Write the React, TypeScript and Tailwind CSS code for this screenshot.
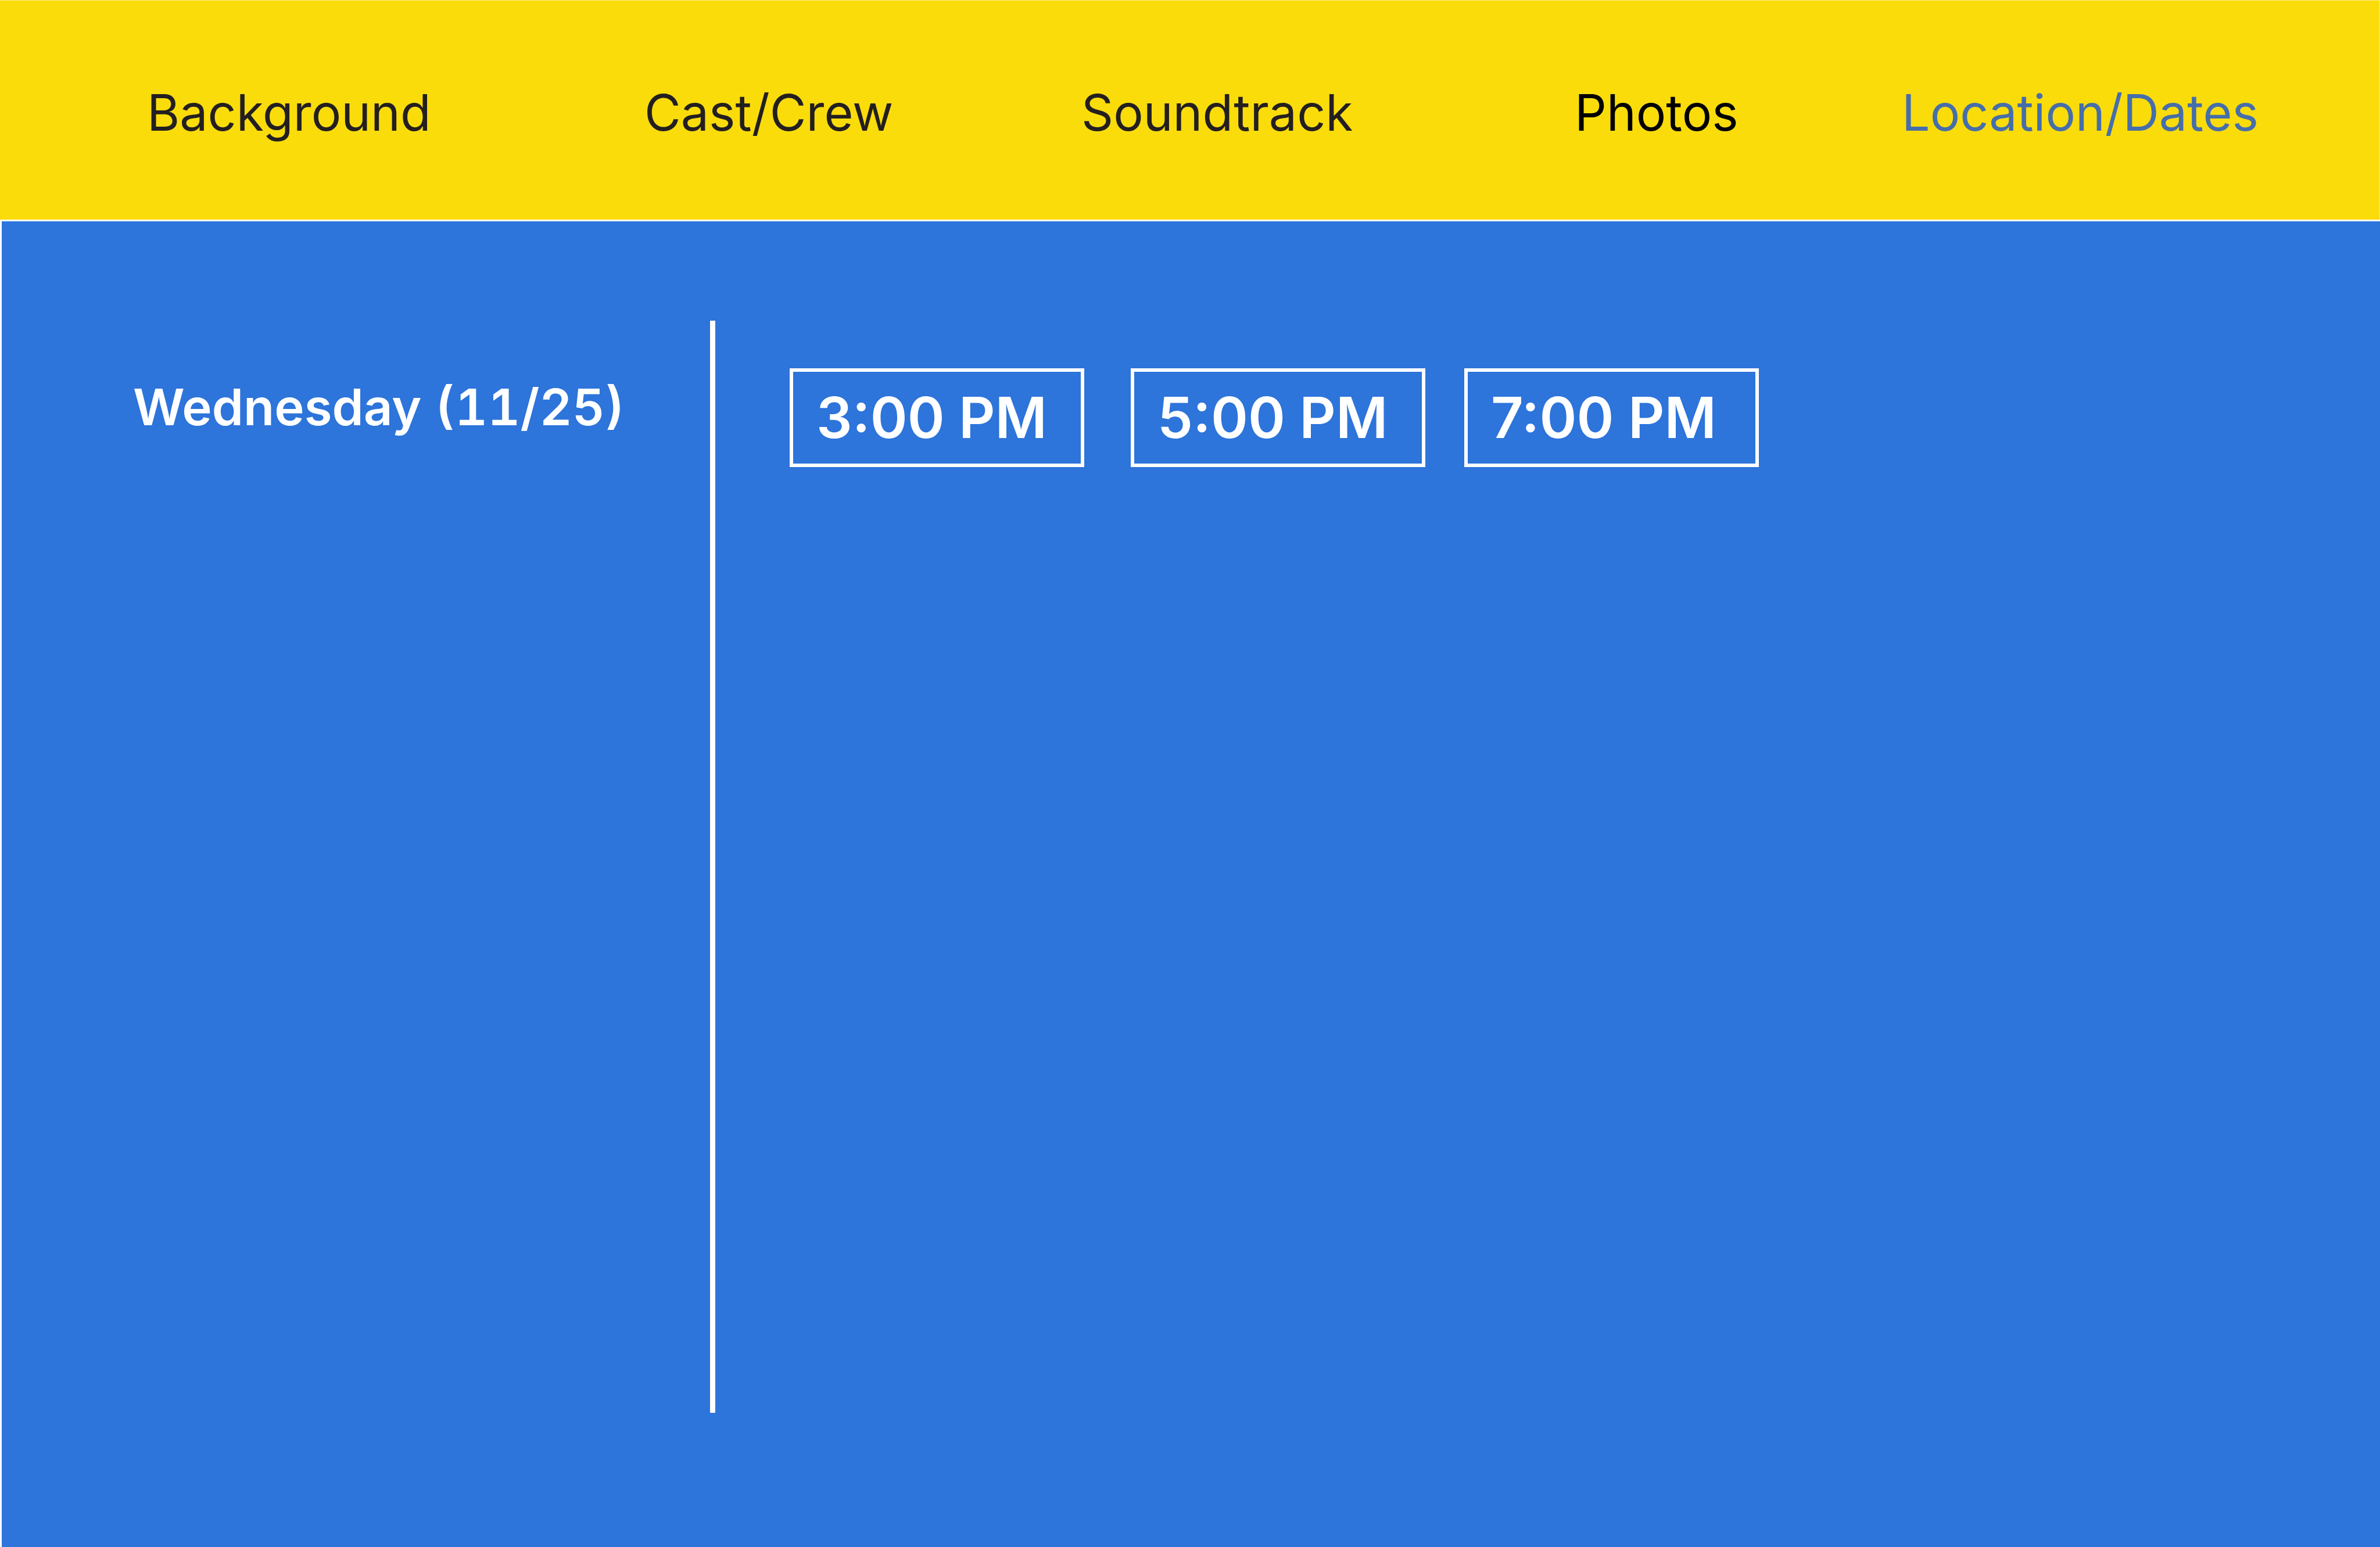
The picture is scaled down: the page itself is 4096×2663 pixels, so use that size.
const links = [
  { label: "Background", href: "#background", color: "text-[#231f20]" },
  { label: "Cast/Crew", href: "#cast-crew", color: "text-[#231f20]" },
  { label: "Soundtrack", href: "#soundtrack", color: "text-[#231f20]" },
  { label: "Photos", href: "#photos", color: "text-black" },
  { label: "Location/Dates", href: "#location-dates", color: "text-[#466eaa]", current: true },
];

function NavBar() {
  return (
    <header className="border-t border-r border-[#fdee8a] bg-[#fadc0b] pt-[137px] pb-[128px] pl-[253px]">
      <nav
        aria-label="Main"
        className="grid grid-cols-[856fr_752fr_849fr_563fr_822fr] text-[86px] leading-[112px]"
      >
        {links.map((link) => (
          <div key={link.label}>
            <a href={link.href} aria-current={link.current ? "page" : undefined} className={link.color}>
              {link.label}
            </a>
          </div>
        ))}
      </nav>
    </header>
  );
}

function TimeButton({ time }: { time: string }) {
  return (
    <button
      type="button"
      className="w-[507px] cursor-pointer border-6 border-white px-10 py-[23px] text-left text-[97px] leading-[112px] font-semibold whitespace-nowrap"
    >
      {time}
    </button>
  );
}

export default function App() {
  return (
    <div className="flex min-h-screen flex-col bg-[#2d74db] font-[Inter,sans-serif]">
      <NavBar />
      <main className="grid flex-1 grid-cols-[1219fr_9px_2865fr] border-t-3 border-l-3 border-white pt-[171px] pb-[231px] text-white">
        <h1 className="pt-[93px] pl-[226px] text-[87px] leading-[112px] font-semibold whitespace-nowrap tabular-nums">
          Wednesday (11/25)
        </h1>
        <div className="bg-white" />
        <div className="flex items-start pt-[82px] pl-32">
          <div className="mr-20">
            <TimeButton time="3:00 PM" />
          </div>
          <div className="flex gap-[67px]">
            <TimeButton time="5:00 PM" />
            <TimeButton time="7:00 PM" />
          </div>
        </div>
      </main>
    </div>
  );
}
